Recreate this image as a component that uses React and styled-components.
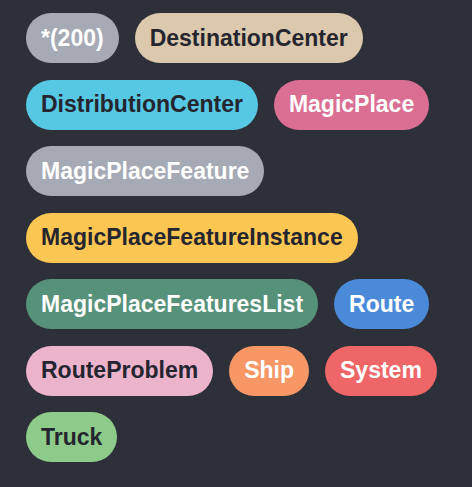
import React from 'react'
import styled, { createGlobalStyle } from 'styled-components'

const GlobalStyle = createGlobalStyle`
  html, body {
    margin: 0;
    padding: 0;
    background: #2e3039;
  }
  body {
    font-family: "Liberation Sans", Arial, sans-serif;
  }
`

const tags = [
  { label: '*(200)', bg: '#a6aab4', light: true },
  { label: 'DestinationCenter', bg: '#dcc9ad' },
  { label: 'DistributionCenter', bg: '#57c8e3' },
  { label: 'MagicPlace', bg: '#da6f93', light: true },
  { label: 'MagicPlaceFeature', bg: '#a6aab4', light: true },
  { label: 'MagicPlaceFeatureInstance', bg: '#fcc653' },
  { label: 'MagicPlaceFeaturesList', bg: '#56917a', light: true },
  { label: 'Route', bg: '#4a8ad8', light: true },
  { label: 'RouteProblem', bg: '#ecb4cb' },
  { label: 'Ship', bg: '#f69765', light: true },
  { label: 'System', bg: '#ef6668', light: true },
  { label: 'Truck', bg: '#8ecb8a' },
]

export default function App() {
  return (
    <>
      <GlobalStyle />
      <TagCloud>
        {tags.map(t => (
          <Tag key={t.label} $bg={t.bg} $light={t.light}>
            {t.label}
          </Tag>
        ))}
      </TagCloud>
    </>
  )
}

const TagCloud = styled.div`
  display: flex;
  flex-wrap: wrap;
  align-items: flex-start;
  row-gap: 16.5px;
  column-gap: 16px;
  padding: 13px 26px;
  min-height: 487px;
  box-sizing: border-box;
  align-content: flex-start;
`

const Tag = styled.span`
  display: inline-flex;
  align-items: center;
  height: 50px;
  padding: 0 15px;
  border-radius: 25px;
  background: ${p => p.$bg};
  color: ${p => (p.$light ? '#ffffff' : '#25252f')};
  font-size: 23px;
  font-weight: 700;
  white-space: nowrap;
  box-sizing: border-box;
`
